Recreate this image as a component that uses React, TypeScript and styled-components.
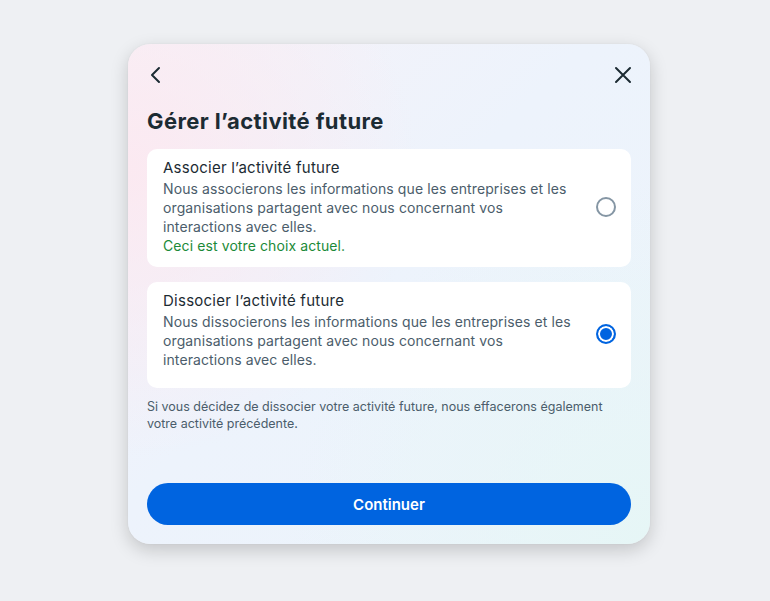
import React, { useState } from 'react';
import styled, { createGlobalStyle } from 'styled-components';

const GlobalStyle = createGlobalStyle`
  html, body {
    margin: 0;
    padding: 0;
    background: #eef0f3;
    font-family: Inter, "Noto Sans", "Liberation Sans", sans-serif;
    -webkit-font-smoothing: antialiased;
  }
`;

const Page = styled.div`
  width: 770px;
  height: 601px;
  display: flex;
  justify-content: center;
  padding: 44px 0 0 8px;
  box-sizing: border-box;
`;

const Dialog = styled.div`
  width: 522px;
  height: 500px;
  box-sizing: border-box;
  border-radius: 22px;
  padding: 19px;
  display: flex;
  flex-direction: column;
  background:
    radial-gradient(circle at 0% 25%, rgba(252, 232, 240, 0.9) 0%, rgba(252, 232, 240, 0) 45%),
    radial-gradient(circle at 100% 100%, rgba(230, 246, 246, 1) 0%, rgba(230, 246, 246, 0) 50%),
    linear-gradient(135deg, #f6f2f8 0%, #edf3fc 45%, #ecf4fb 100%);
  box-shadow: 0 6px 18px rgba(0, 0, 0, 0.18), 0 0 2px rgba(0, 0, 0, 0.06);
`;

const TopBar = styled.div`
  display: flex;
  justify-content: space-between;
  align-items: center;
  height: 24px;
  margin-left: -3px;
  margin-right: -4px;
`;

const IconButton = styled.button`
  border: none;
  background: none;
  padding: 0;
  width: 24px;
  height: 24px;
  display: flex;
  align-items: center;
  justify-content: center;
  color: #1c2b33;
  cursor: pointer;
`;

const Title = styled.h1`
  margin: 20px 0 14px;
  font-size: 22px;
  line-height: 28px;
  font-weight: 700;
  color: #1c2b33;
  letter-spacing: 0.4px;
`;

const Options = styled.div`
  display: flex;
  flex-direction: column;
  gap: 15px;
`;

const Card = styled.label`
  display: flex;
  align-items: center;
  gap: 16px;
  min-height: 106px;
  box-sizing: border-box;
  background: #ffffff;
  border-radius: 10px;
  padding: 9px 16px 12px 16px;
  cursor: pointer;
`;

const CardText = styled.div`
  flex: 1;
  align-self: flex-start;
  display: flex;
  flex-direction: column;
`;

const CardTitle = styled.div`
  font-size: 15px;
  line-height: 20px;
  color: #1c2b33;
  letter-spacing: 0.25px;
  margin-bottom: 1px;
`;

const CardBody = styled.div`
  font-size: 14px;
  line-height: 19px;
  color: #4b5d6b;
  letter-spacing: 0.1px;
`;

const Current = styled.div`
  font-size: 14px;
  line-height: 19px;
  color: #1b8a38;
  letter-spacing: 0.1px;
`;

const Radio = styled.span<{ $checked: boolean }>`
  width: 20px;
  height: 20px;
  box-sizing: border-box;
  border-radius: 50%;
  flex-shrink: 0;
  margin-right: -1px;
  border: 2px solid ${({ $checked }) => ($checked ? '#0064e0' : '#8596a4')};
  background: ${({ $checked }) => ($checked ? '#0064e0' : '#fff')};
  box-shadow: ${({ $checked }) => ($checked ? 'inset 0 0 0 2px #fff' : 'none')};
`;

const Note = styled.p`
  margin: 10px 0 0;
  font-size: 12.5px;
  line-height: 17px;
  color: #4b5d6b;
`;

const Spacer = styled.div`
  flex: 1;
`;

const PrimaryButton = styled.button`
  height: 42px;
  border: none;
  border-radius: 21px;
  background: #0064e0;
  color: #fff;
  font-family: inherit;
  font-size: 15px;
  font-weight: 600;
  cursor: pointer;
`;

const options = [
  {
    id: 'associate',
    title: 'Associer l’activité future',
    body: 'Nous associerons les informations que les entreprises et les organisations partagent avec nous concernant vos interactions avec elles.',
    current: true,
  },
  {
    id: 'dissociate',
    title: 'Dissocier l’activité future',
    body: 'Nous dissocierons les informations que les entreprises et les organisations partagent avec nous concernant vos interactions avec elles.',
    current: false,
  },
];

export default function App() {
  const [selected, setSelected] = useState('dissociate');

  return (
    <>
      <GlobalStyle />
      <Page>
        <Dialog>
          <TopBar>
            <IconButton aria-label="Retour">
              <svg width="24" height="24" viewBox="0 0 24 24" fill="none">
                <path d="M15 5l-7 7 7 7" stroke="currentColor" strokeWidth="2" strokeLinecap="round" strokeLinejoin="round" />
              </svg>
            </IconButton>
            <IconButton aria-label="Fermer">
              <svg width="24" height="24" viewBox="0 0 24 24" fill="none">
                <path d="M5 5l14 14M19 5L5 19" stroke="currentColor" strokeWidth="2" strokeLinecap="round" />
              </svg>
            </IconButton>
          </TopBar>
          <Title>Gérer l’activité future</Title>
          <Options>
            {options.map(o => (
              <Card key={o.id} onClick={() => setSelected(o.id)}>
                <CardText>
                  <CardTitle>{o.title}</CardTitle>
                  <CardBody>{o.body}</CardBody>
                  {o.current && <Current>Ceci est votre choix actuel.</Current>}
                </CardText>
                <Radio $checked={selected === o.id} />
              </Card>
            ))}
          </Options>
          <Note>
            Si vous décidez de dissocier votre activité future, nous effacerons également votre activité précédente.
          </Note>
          <Spacer />
          <PrimaryButton>Continuer</PrimaryButton>
        </Dialog>
      </Page>
    </>
  );
}
